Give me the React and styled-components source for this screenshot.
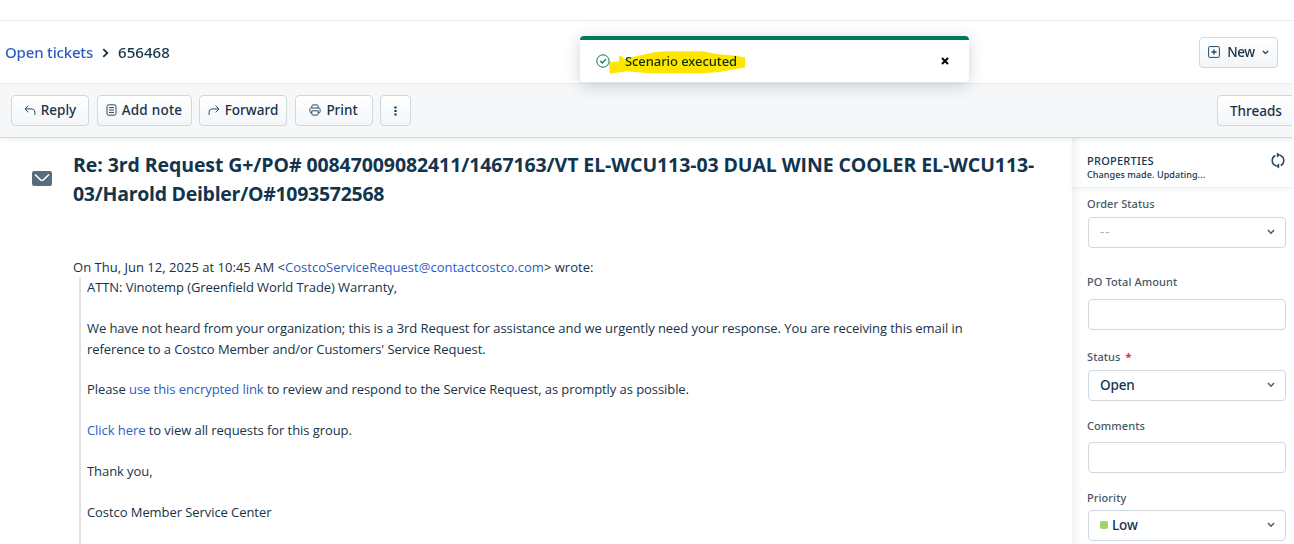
import styled, { createGlobalStyle } from "styled-components";

const fields = [
    { label: "Order Status", value: "--", select: true, muted: true, gap: 26 },
    { label: "PO Total Amount", value: "", gap: 19, space: 9 },
    { label: "Status", value: "Open", select: true, required: true, gap: 17 },
    { label: "Comments", value: "", gap: 17, space: 8 },
    { label: "Priority", value: "Low", select: true, dot: true, gap: 0, space: 4 },
];

const ReplyIcon = () => (
    <Icon width="12" height="12" viewBox="0 0 12 12">
        <path d="M4.4 1.6 1 4.9l3.4 3.3M1 4.9h6.3c2.2 0 3.6 1.2 3.6 3.4v2.6" />
    </Icon>
);

const ForwardIcon = () => (
    <Icon width="12" height="12" viewBox="0 0 12 12">
        <path d="M7.6 1.6 11 4.9 7.6 8.2M11 4.9H4.7C2.5 4.9 1.1 6.1 1.1 8.3v2.6" />
    </Icon>
);

const NoteIcon = () => (
    <Icon width="11" height="12" viewBox="0 0 11 12">
        <rect x="1" y="0.8" width="9" height="10.4" rx="1.8" />
        <path d="M3 3.6h5M3 6h5M3 8.4h5" />
    </Icon>
);

const PrintIcon = () => (
    <Icon width="12" height="12" viewBox="0 0 12 12">
        <path d="M2.8 4V2.2c0-.8.5-1.3 1.3-1.3h3.8c.8 0 1.3.5 1.3 1.3V4" />
        <path d="M2.8 8.9h-.5C1.4 8.9.9 8.3.9 7.5v-2C.9 4.6 1.4 4 2.3 4h7.4c.9 0 1.4.6 1.4 1.5v2c0 .8-.5 1.4-1.4 1.4h-.5" />
        <path d="M2.8 6.8h6.4v3c0 .8-.5 1.3-1.3 1.3H4.1c-.8 0-1.3-.5-1.3-1.3z" />
    </Icon>
);

const DotsIcon = () => (
    <DotsSvg width="3" height="10" viewBox="0 0 3 10">
        <path d="M.4.6h2.200v2H.4zM.4 4h2.200v2H.4zM.4 7.400h2.200v2H.4z" />
    </DotsSvg>
);

const PlusIcon = () => (
    <Icon width="12" height="12" viewBox="0 0 12 12">
        <rect x="0.6" y="0.6" width="10.8" height="10.8" rx="0.8" />
        <path d="M6 3.4v5.2M3.4 6h5.2" strokeWidth="1.4" />
    </Icon>
);

const Chevron = ({ color = "#475867", size = 8 }) => (
    <Icon width={size} height={size * 0.7} viewBox="0 0 10 7">
        <path d="M1.2 1.3 5 5.2l3.8-3.9" stroke={color} strokeWidth="1.8" />
    </Icon>
);

const RefreshIcon = () => (
    <Icon width="14" height="17" viewBox="0 0 14 17">
        <path
            d="M5 13.8C2.7 13 1.2 11 1.2 8.5c0-2.2 1.2-4.1 3.1-5M9 3.2c2.3.8 3.8 2.8 3.800 5.300 0 2.200-1.200 4.100-3.100 5"
            strokeWidth="1.500"
        />
        <path
            d="M5.800.6v5L9.400 3.100zM8.200 11.400v5L4.600 13.900z"
            fill="#33475b"
            stroke="none"
        />
    </Icon>
);

export default function App() {
    return (
        <Page>
            <GlobalStyle />
            <TopStrip />
            <Header>
                <Crumbs>
                    <CrumbLink>Open tickets</CrumbLink>
                    <CrumbArrow width="7" height="10" viewBox="0 0 7 10">
                        <path d="M1.300 1.200 5.300 5l-4 3.800" strokeWidth="1.800" />
                    </CrumbArrow>
                    <span>656468</span>
                </Crumbs>
                <NewButton>
                    <PlusIcon />
                    <span>New</span>
                    <Chevron color="#12344d" size={7} />
                </NewButton>
                <Toast>
                    <svg width="14" height="14" viewBox="0 0 14 14" fill="none">
                        <circle cx="7" cy="7" r="6.200" stroke="#00795b" />
                        <path
                            d="M4.200 6.900 6.300 9l3.700-3.900"
                            stroke="#00795b"
                            strokeWidth="1.300"
                        />
                    </svg>
                    <ToastText>
                        Scenario executed
                        <Marker viewBox="118 94 412 68" preserveAspectRatio="none">
                            <path d="M118 128 148 124V110l6-2 11 10 25-6 40-9q28-7 60-8h110l40 8 60 5 27 5v30l-28 4-50 9-50 4H240l-70-6-50 7z" />
                        </Marker>
                    </ToastText>
                    <Icon width="8" height="8" viewBox="0 0 8 8">
                        <path d="m1 1 6 6M7 1 1 7" stroke="#000" strokeWidth="2" />
                    </Icon>
                </Toast>
            </Header>
            <Toolbar>
                <Button $width={78}>
                    <ReplyIcon />
                    Reply
                </Button>
                <Button $width={95} $spacing={0.25}>
                    <NoteIcon />
                    Add note
                </Button>
                <Button $width={88}>
                    <ForwardIcon />
                    Forward
                </Button>
                <Button $width={78}>
                    <PrintIcon />
                    Print
                </Button>
                <Button $width={31}>
                    <DotsIcon />
                </Button>
                <Threads>Threads</Threads>
            </Toolbar>
            <Body>
                <Ticket>
                    <MailIcon width="20" height="15" viewBox="0 0 20 15">
                        <rect width="20" height="15" rx="2.200" fill="#576c7d" />
                        <path
                            d="M3 3.500 8.600 8.900q1.400 1.200 2.800 0L17 3.500"
                            fill="none"
                            stroke="#fff"
                            strokeWidth="1.500"
                        />
                    </MailIcon>
                    <Content>
                        <Title>
                            <Line $spacing={-0.09}>
                                Re: 3rd Request G+/PO# 00847009082411/1467163/VT
                                EL-WCU113-03 DUAL WINE COOLER EL-WCU113-
                            </Line>
                            <Line $spacing={-0.28}>
                                03/Harold Deibler/O#1093572568
                            </Line>
                        </Title>
                        <Line $spacing={0.02}>
                            On Thu, Jun 12, 2025 at 10:45 AM &lt;
                            <Link>CostcoServiceRequest@contactcostco.com</Link>&gt;
                            wrote:
                        </Line>
                        <Quote>
                            <Line>ATTN: Vinotemp (Greenfield World Trade) Warranty,</Line>
                            <Paragraph>
                                <Line>
                                    We have not heard from your organization; this
                                    is a 3rd Request for assistance and we urgently
                                    need your response. You are receiving this email
                                    in
                                </Line>
                                <Line>
                                    reference to a Costco Member and/or Customers'
                                    Service Request.
                                </Line>
                            </Paragraph>
                            <Paragraph>
                                <Line>
                                    Please <Link>use this encrypted link</Link> to
                                    review and respond to the Service Request, as
                                    promptly as possible.
                                </Line>
                            </Paragraph>
                            <Paragraph>
                                <Line>
                                    <Link>Click here</Link> to view all requests for
                                    this group.
                                </Line>
                            </Paragraph>
                            <Paragraph>
                                <Line>Thank you,</Line>
                            </Paragraph>
                            <Paragraph>
                                <Line>Costco Member Service Center</Line>
                            </Paragraph>
                        </Quote>
                    </Content>
                </Ticket>
                <Sidebar>
                    <SideHeader>
                        <div>
                            <SideTitle>PROPERTIES</SideTitle>
                            <SideNote>Changes made. Updating...</SideNote>
                        </div>
                        <RefreshIcon />
                    </SideHeader>
                    <Fields>
                        {fields.map((f) => (
                            <Field key={f.label} $gap={f.gap}>
                                <Label $space={f.space}>
                                    {f.label}
                                    {f.required && <Star>*</Star>}
                                </Label>
                                <Box $muted={f.muted}>
                                    {f.dot && <Dot />}
                                    <Value>{f.value}</Value>
                                    {f.select && <Chevron />}
                                </Box>
                            </Field>
                        ))}
                    </Fields>
                </Sidebar>
            </Body>
        </Page>
    );
}

const GlobalStyle = createGlobalStyle`
    * {
        box-sizing: border-box;
    }
    body {
        margin: 0;
        background: #fff;
        overflow: hidden;
    }
`;

const Page = styled.div`
    display: flex;
    flex-direction: column;
    width: 1292px;
    height: 544px;
    overflow: hidden;
    background: #fff;
    color: #12344d;
    font-family: "Noto Sans", "Open Sans", sans-serif;
    font-size: 13px;
`;

const Icon = styled.svg`
    flex: none;
    fill: none;
    stroke: #264966;
`;

const DotsSvg = styled.svg`
    margin-top: 2px;
    fill: #12344d;
`;

const CrumbArrow = styled(Icon)`
    margin-top: 2px;
    stroke: #12344d;
`;

const TopStrip = styled.div`
    flex: none;
    height: 21px;
    border-bottom: 1px solid #e9ebee;
`;

const Header = styled.header`
    position: relative;
    z-index: 2;
    display: flex;
    flex: none;
    align-items: center;
    justify-content: space-between;
    height: 63px;
    padding: 0 14px 0 5px;
    border-bottom: 1px solid #ebeff3;
`;

const Crumbs = styled.nav`
    display: flex;
    align-items: center;
    gap: 9px;
    margin-top: -1px;
    font-size: 15px;
    font-weight: 500;
    letter-spacing: 0.05px;
`;

const CrumbLink = styled.a`
    width: 88px;
    color: #2c5cc5;
    letter-spacing: -0.18px;
    white-space: nowrap;
`;

const Button = styled.button`
    display: flex;
    flex: none;
    align-items: center;
    justify-content: center;
    gap: 5px;
    width: ${(p) => p.$width}px;
    height: 31px;
    padding: 0 0 1px;
    border: 1px solid #cfd7df;
    border-radius: 4px;
    background: linear-gradient(#fff, #f3f5f7);
    color: #183247;
    font: 500 13.5px "Noto Sans", sans-serif;
    letter-spacing: ${(p) => p.$spacing || 0}px;
    white-space: nowrap;
`;

const NewButton = styled(Button)`
    gap: 7px;
    width: 79px;
    padding: 0;
    letter-spacing: -0.4px;
`;

const Toast = styled.div`
    position: absolute;
    top: 15px;
    left: 580px;
    display: flex;
    align-items: center;
    width: 389px;
    height: 46px;
    padding: 0 20px 1px 16px;
    border-top: 4px solid #00795b;
    border-radius: 4px;
    background: #fff;
    box-shadow: 0 3px 16px rgba(18, 52, 77, 0.22);
`;

const ToastText = styled.div`
    position: relative;
    flex: 1;
    margin: 0 0 0 15px;
    font-weight: 500;
    letter-spacing: -0.08px;
    line-height: 18px;
`;

const Marker = styled.svg`
    position: absolute;
    top: -1px;
    left: -16px;
    width: 137px;
    height: 23px;
    fill: #ffe600;
    mix-blend-mode: multiply;
`;

const Toolbar = styled.div`
    position: relative;
    z-index: 1;
    display: flex;
    flex: none;
    align-items: center;
    gap: 7.5px;
    height: 54px;
    padding-left: 11px;
    border-bottom: 1px solid #cfd7df;
    background: #f5f7f9;
    box-shadow: 0 2px 4px rgba(18, 52, 77, 0.07);
`;

const Threads = styled(Button)`
    justify-content: flex-start;
    width: 75px;
    margin-left: auto;
    padding: 0 0 0 12px;
    border-right: 0;
    border-radius: 4px 0 0 4px;
`;

const Body = styled.main`
    display: flex;
    flex: 1;
    min-height: 0;
`;

const Ticket = styled.section`
    display: flex;
    flex: 1;
    min-width: 0;
    padding: 12px 0 0 32px;
`;

const MailIcon = styled.svg`
    flex: none;
    margin: 21px 21px 0 0;
`;

const Content = styled.article`
    flex: 1;
    display: flex;
    flex-direction: column;
    color: #183247;
    font-family: "Open Sans", sans-serif;
    line-height: 20.4px;
`;

const Title = styled.h1`
    margin: 0 0 49px;
    color: #12344d;
    font-size: 19.5px;
    font-weight: 700;
    line-height: 29px;
`;

const Line = styled.div`
    letter-spacing: ${(p) => p.$spacing ?? -0.07}px;
    white-space: nowrap;
`;

const Link = styled.a`
    color: #2c5cc5;
`;

const Quote = styled.blockquote`
    flex: 1;
    margin: 0 0 0 6px;
    padding-left: 6px;
    border-left: 2px solid #e2e2e2;
`;

const Paragraph = styled.div`
    margin-top: 20.4px;
`;

const Sidebar = styled.aside`
    flex: none;
    width: 220px;
    background: #fff;
    box-shadow: inset 8px 0 8px -5px rgba(18, 52, 77, 0.08);
`;

const SideHeader = styled.div`
    display: flex;
    justify-content: space-between;
    height: 50px;
    padding: 14px 7px 0 15px;
    border-bottom: 1px solid #ebeff3;
    box-shadow: 0 2px 4px rgba(18, 52, 77, 0.05);
`;

const SideTitle = styled.div`
    font-size: 11px;
    font-weight: 500;
    letter-spacing: 0.25px;
    line-height: 17px;
`;

const SideNote = styled.div`
    font-size: 9px;
    font-weight: 500;
    letter-spacing: 0.08px;
    line-height: 11px;
`;

const Fields = styled.div`
    padding: 8px 6px 0 16px;
`;

const Field = styled.div`
    margin-bottom: ${(p) => p.$gap}px;
`;

const Label = styled.div`
    margin: 0 0 ${(p) => p.$space || 5}px -1px;
    color: #475867;
    font-size: 11px;
    font-weight: 500;
    letter-spacing: 0.08px;
    line-height: 16px;
`;

const Star = styled.span`
    margin-left: 5px;
    color: #d72d30;
    font-weight: 700;
`;

const Box = styled.div`
    display: flex;
    align-items: center;
    height: 31px;
    padding: 0 10px 1px 11px;
    border: 1px solid #cfd7df;
    border-radius: 4px;
    color: ${(p) => (p.$muted ? "#a9b6c2" : "#12344d")};
    font-size: 13.5px;
    font-weight: ${(p) => (p.$muted ? 400 : 500)};
    letter-spacing: ${(p) => (p.$muted ? 1 : -0.15)}px;
`;

const Value = styled.span`
    flex: 1;
`;

const Dot = styled.i`
    width: 8px;
    height: 8px;
    margin-right: 4px;
    border-radius: 2px;
    background: #a0d76a;
`;
